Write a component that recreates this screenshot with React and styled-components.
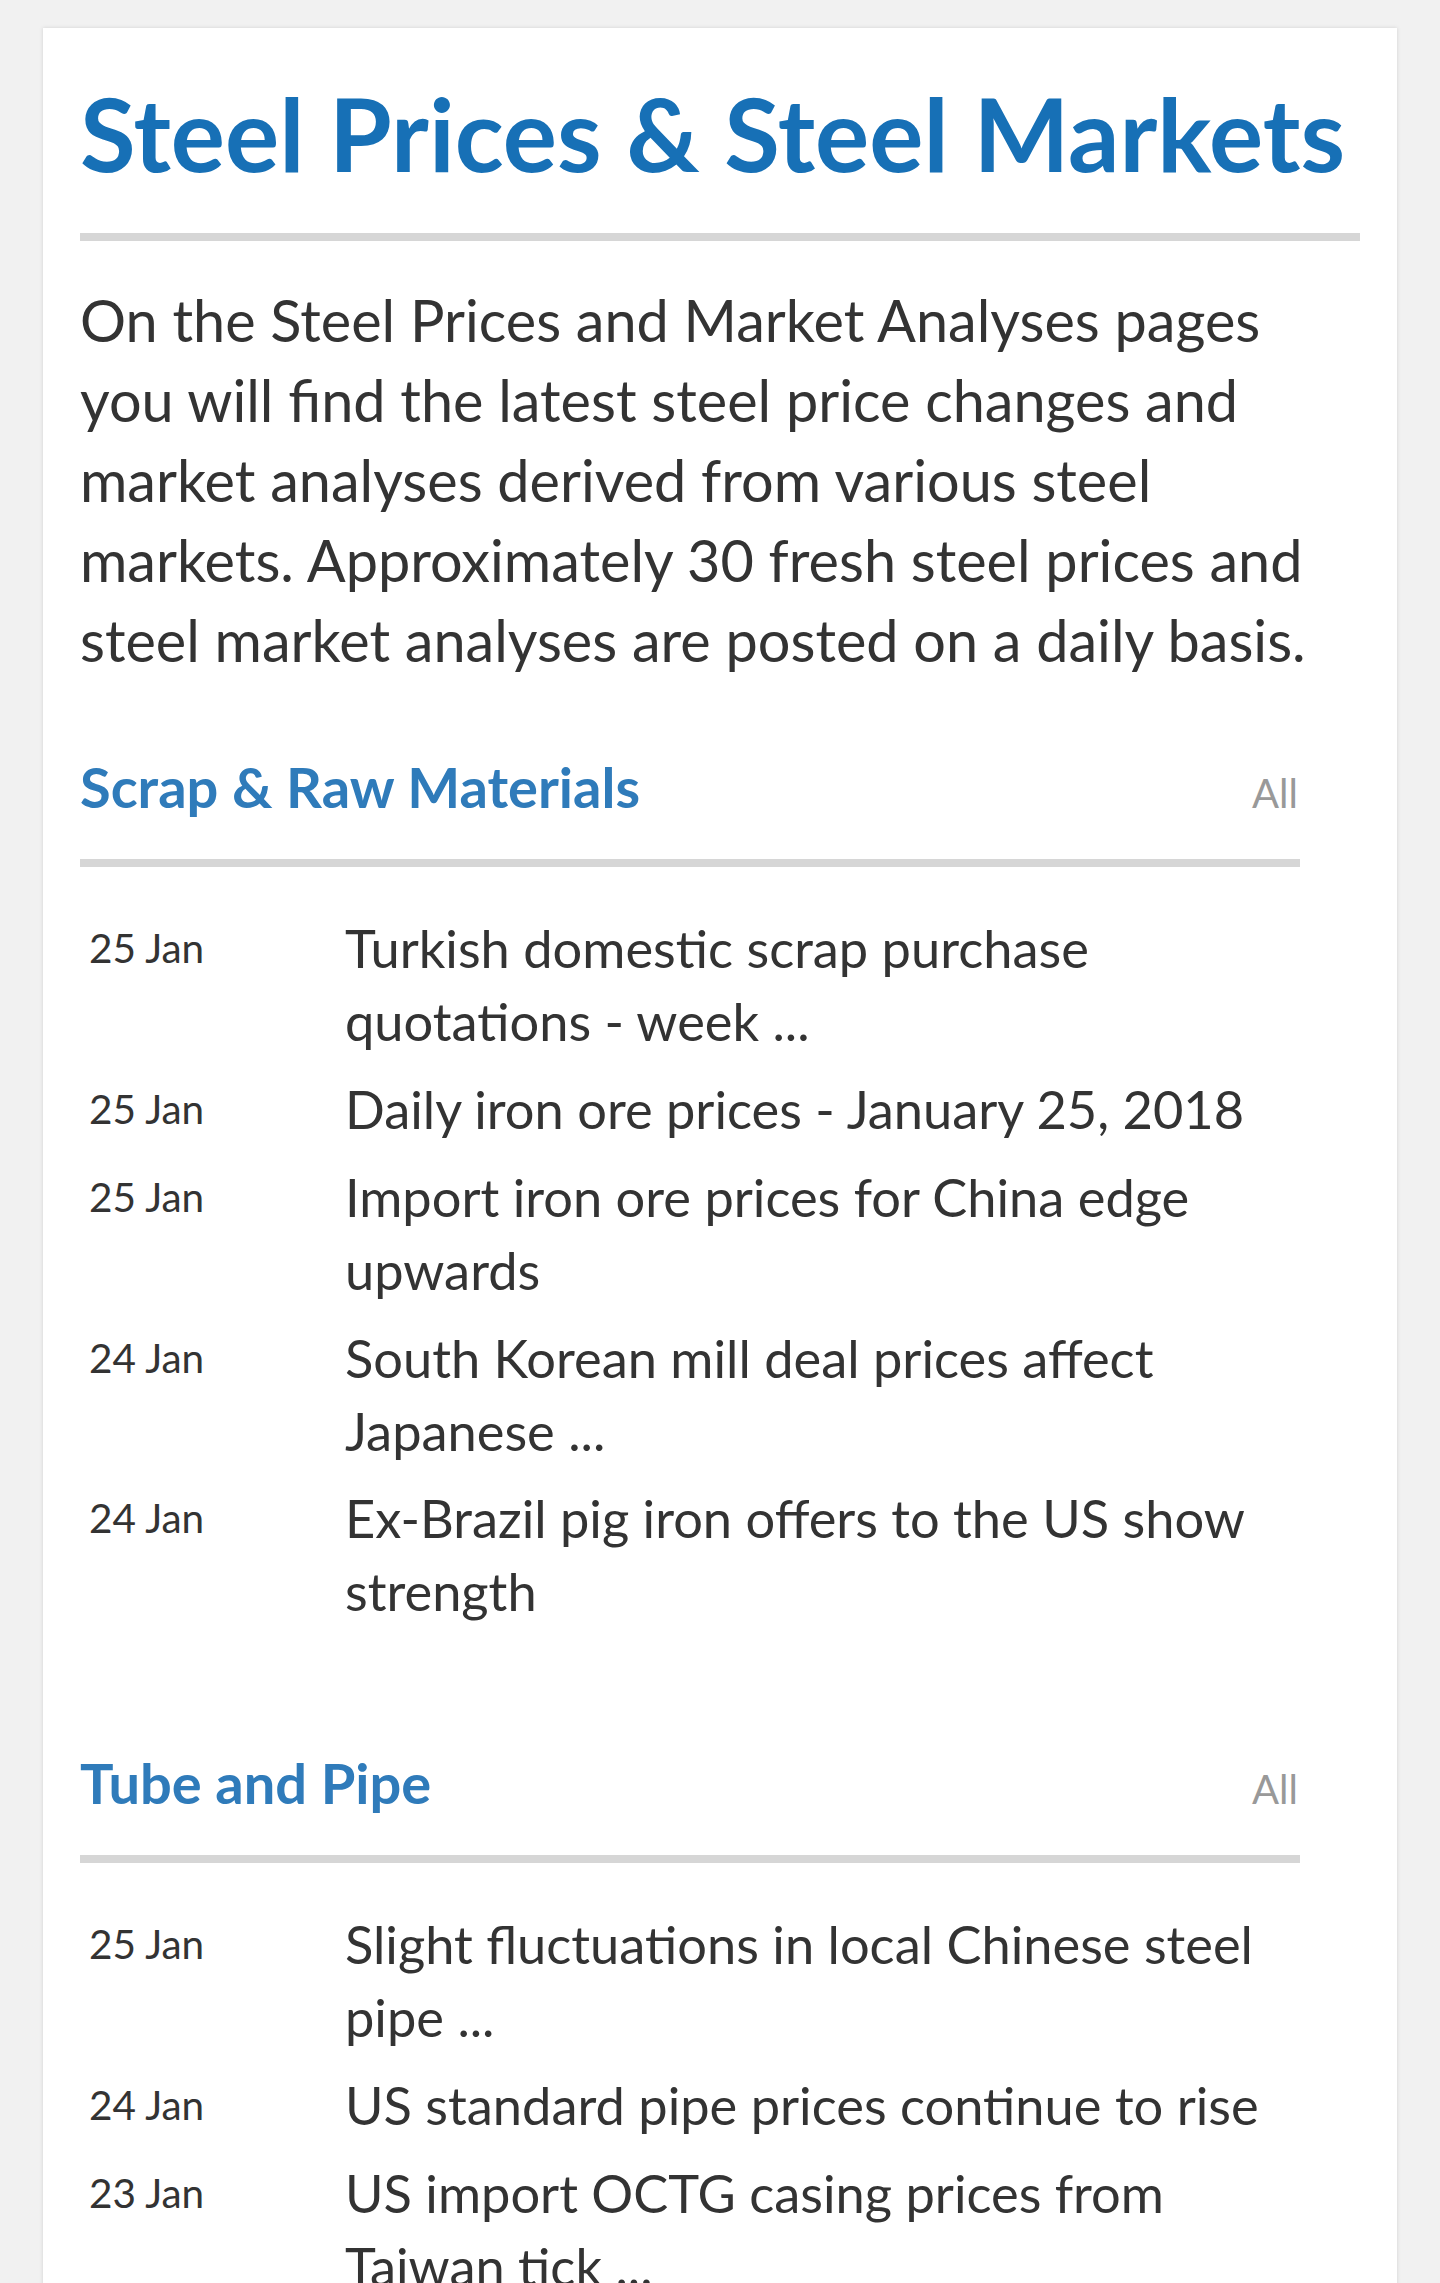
import React from 'react';
import styled, { createGlobalStyle } from 'styled-components';

const Global = createGlobalStyle`
  body {
    margin: 0;
    background: #f1f1f1;
    font-family: Lato, "Open Sans", sans-serif;
    color: #333;
  }
  * { box-sizing: border-box; }
`

const Page = styled.div`
  padding: 28px 43px 0;
`
const Card = styled.main`
  background: #fff;
  box-shadow: 0 0 4px rgba(0, 0, 0, 0.13);
  padding: 45px 37px 0;
`
const Title = styled.h1`
  margin: 0;
  font-size: 101.5px;
  line-height: 1.2;
  font-weight: 700;
  color: #1770b6;
`
const Rule = styled.hr`
  margin: ${p => p.$top || 38}px 0 0;
  border: none;
  height: 8px;
  width: ${p => p.$width || '100%'};
  background: #d6d6d6;
`
const Intro = styled.p`
  margin: 39px 0 0;
  font-size: 57.6px;
  line-height: 80px;
  color: #333;
`
const Section = styled.section`
  margin-top: 73px;
  padding-bottom: 34px;
`
const SectionHead = styled.div`
  display: flex;
  justify-content: space-between;
  align-items: baseline;
  width: 1220px;
`
const SectionTitle = styled.h2`
  margin: 0;
  font-size: 56px;
  line-height: 1.2;
  font-weight: 700;
  color: #2f7bba;
`
const AllLink = styled.a`
  font-size: 40px;
  color: #999;
  text-decoration: none;
  margin-right: 2px;
`
const List = styled.ul`
  margin: 44px 0 0;
  padding: 0;
  list-style: none;
  width: 1240px;
`
const Row = styled.li`
  display: grid;
  grid-template-columns: 256px 1fr;
  align-items: start;
  padding-left: 9px;
  margin-bottom: 14.6px;
`
const Date = styled.span`
  font-size: 40.5px;
  line-height: 74px;
  color: #333;
`
const Headline = styled.a`
  font-size: 52.4px;
  line-height: 73px;
  color: #333;
  text-decoration: none;
`

const sections = [
  {
    title: 'Scrap & Raw Materials',
    items: [
      ['25 Jan', 'Turkish domestic scrap purchase quotations - week ...'],
      ['25 Jan', 'Daily iron ore prices - January 25, 2018'],
      ['25 Jan', 'Import iron ore prices for China edge upwards'],
      ['24 Jan', 'South Korean mill deal prices affect Japanese ...'],
      ['24 Jan', 'Ex-Brazil pig iron offers to the US show strength'],
    ],
  },
  {
    title: 'Tube and Pipe',
    items: [
      ['25 Jan', 'Slight fluctuations in local Chinese steel pipe ...'],
      ['24 Jan', 'US standard pipe prices continue to rise'],
      ['23 Jan', 'US import OCTG casing prices from Taiwan tick ...'],
    ],
  },
]

export default function App() {
  return (
    <Page>
      <Global />
      <Card>
        <Title>Steel Prices &amp; Steel Markets</Title>
        <Rule />
        <Intro>
          On the Steel Prices and Market Analyses pages you will find the latest steel price
          changes and market analyses derived from various steel markets. Approximately 30 fresh
          steel prices and steel market analyses are posted on a daily basis.
        </Intro>
        {sections.map(s => (
          <Section key={s.title}>
            <SectionHead>
              <SectionTitle>{s.title}</SectionTitle>
              <AllLink href="#">All</AllLink>
            </SectionHead>
            <Rule $top={39} $width="1220px" />
            <List>
              {s.items.map(([d, t], i) => (
                <Row key={i}>
                  <Date>{d}</Date>
                  <Headline href="#">{t}</Headline>
                </Row>
              ))}
            </List>
          </Section>
        ))}
      </Card>
    </Page>
  )
}
